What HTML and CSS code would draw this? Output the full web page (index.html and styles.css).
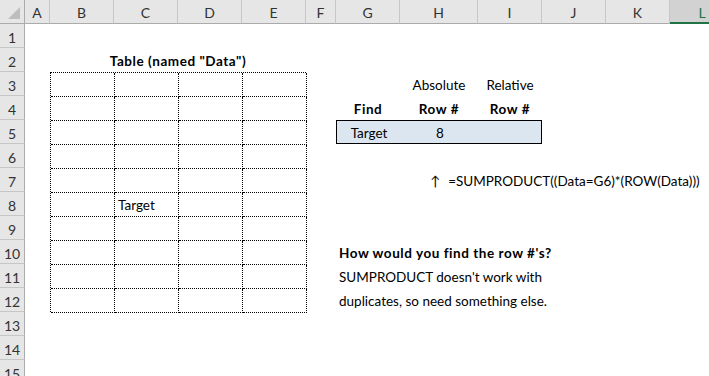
FILE: index.html
```html
<!DOCTYPE html>
<html lang="en">
<head>
    <meta charset="UTF-8">
    <meta name="viewport" content="width=device-width, initial-scale=1.0">
    <title>Find row numbers</title>
    <link rel="stylesheet" href="styles.css">
</head>
<body>
    <div class="sheet">
        <!-- column headers -->
        <div class="corner"><span class="triangulo"></span></div>
        <div class="colhead">A</div>
        <div class="colhead">B</div>
        <div class="colhead">C</div>
        <div class="colhead">D</div>
        <div class="colhead">E</div>
        <div class="colhead">F</div>
        <div class="colhead">G</div>
        <div class="colhead">H</div>
        <div class="colhead">I</div>
        <div class="colhead">J</div>
        <div class="colhead">K</div>
        <div class="colhead ativa">L</div>

        <!-- row headers -->
        <div class="rowhead">1</div>
        <div class="rowhead">2</div>
        <div class="rowhead">3</div>
        <div class="rowhead">4</div>
        <div class="rowhead">5</div>
        <div class="rowhead">6</div>
        <div class="rowhead">7</div>
        <div class="rowhead">8</div>
        <div class="rowhead">9</div>
        <div class="rowhead">10</div>
        <div class="rowhead">11</div>
        <div class="rowhead">12</div>
        <div class="rowhead">13</div>
        <div class="rowhead">14</div>
        <div class="rowhead">15</div>

        <!-- B2:E12 -->
        <div class="cell titulo negrito">Table (named "Data")</div>
        <div class="dados">
            <div></div><div></div><div></div><div></div>
            <div></div><div></div><div></div><div></div>
            <div></div><div></div><div></div><div></div>
            <div></div><div></div><div></div><div></div>
            <div></div><div></div><div></div><div></div>
            <div></div><div>Target</div><div></div><div></div>
            <div></div><div></div><div></div><div></div>
            <div></div><div></div><div></div><div></div>
            <div></div><div></div><div></div><div></div>
            <div></div><div></div><div></div><div></div>
        </div>

        <!-- G3:I5 -->
        <div class="cell centro h3">Absolute</div>
        <div class="cell centro i3">Relative</div>
        <div class="cell centro negrito g4">Find</div>
        <div class="cell centro negrito h4">Row #</div>
        <div class="cell centro negrito i4">Row #</div>
        <div class="busca">
            <div class="cell centro">Target</div>
            <div class="cell centro">8</div>
            <div class="cell"></div>
        </div>

        <div class="cell formula"><span class="seta">&uarr;</span>=SUMPRODUCT((Data=G6)*(ROW(Data)))</div>

        <div class="cell negrito g10">How would you find the row #'s?</div>
        <div class="cell g11">SUMPRODUCT doesn't work with</div>
        <div class="cell g12">duplicates, so need something else.</div>
    </div>
</body>
</html>
```

FILE: styles.css
```css
:root{
    --cabecalho: #e6e6e6;
    --linha: #c6c6c6;
    --borda: #ababab;
    --verde: #217346;
    --azul: #dce6f1;
}

*{
    margin: 0;
    padding: 0;
    box-sizing: border-box;
}

body{
    width: 709px;
    height: 376px;
    overflow: hidden;
    background-color: white;
    font-family: Lato, "Open Sans", sans-serif;
    font-size: 13.5px;
    color: #000;
}

.sheet{
    display: grid;
    grid-template-columns: 25px 25px 64px 64px 64px 64px 30px 64px 78px 64px 64px 64px 64px;
    grid-template-rows: repeat(16, 24px);
}

/* cabeçalhos */
.corner{
    grid-column: 1;
    grid-row: 1;
    background-color: var(--cabecalho);
    border-right: 1px solid var(--borda);
    border-bottom: 1px solid var(--borda);
    display: flex;
    justify-content: flex-end;
    align-items: flex-end;
    padding: 0 4px 4px 0;
}

.triangulo{
    width: 0;
    height: 0;
    border-left: 12px solid transparent;
    border-bottom: 12px solid #bdbdbd;
}

.colhead{
    grid-row: 1;
    background-color: var(--cabecalho);
    border-right: 1px solid var(--linha);
    border-bottom: 1px solid var(--borda);
    display: flex;
    justify-content: center;
    align-items: center;
    padding-top: 2px;
    font-size: 14px;
    color: #333;
}

.colhead.ativa{
    background-color: #d2d2d2;
    border-bottom: 2px solid var(--verde);
    color: var(--verde);
    border-right: none;
}

.rowhead{
    grid-column: 1;
    background-color: var(--cabecalho);
    border-right: 1px solid var(--borda);
    border-bottom: 1px solid var(--linha);
    display: flex;
    justify-content: center;
    align-items: center;
    padding-top: 3px;
    font-size: 14px;
    color: #333;
}

/* células */
.cell{
    display: flex;
    align-items: flex-end;
    padding: 0 3px 3px;
    white-space: nowrap;
}

.centro{
    justify-content: center;
}

.negrito{
    font-weight: bold;
    letter-spacing: 0.55px;
}

.titulo{
    grid-column: 3 / 7;
    grid-row: 3;
    justify-content: center;
}

.dados{
    grid-column: 3 / 7;
    grid-row: 4 / 14;
    display: grid;
    grid-template-columns: repeat(4, 64px);
    grid-template-rows: repeat(10, 24px);
    border-top: 1px dotted #000;
    border-left: 1px dotted #000;
}

.dados > div{
    border-right: 1px dotted #000;
    border-bottom: 1px dotted #000;
    display: flex;
    align-items: flex-end;
    padding: 0 3px 3px;
}

.h3{ grid-column: 9; grid-row: 4; }
.i3{ grid-column: 10; grid-row: 4; }
.g4{ grid-column: 8; grid-row: 5; }
.h4{ grid-column: 9; grid-row: 5; }
.i4{ grid-column: 10; grid-row: 5; }

.busca{
    grid-column: 8 / 11;
    grid-row: 6;
    display: grid;
    grid-template-columns: 64px 78px 64px;
    background-color: var(--azul);
    border: 1px solid #000;
}

.busca > .cell{
    padding-bottom: 2px;
}

.formula{
    grid-column: 9 / 14;
    grid-row: 8;
    padding-left: 30px;
}

.seta{
    margin-right: 8px;
}

.g10{ grid-column: 8 / 14; grid-row: 11; }
.g11{ grid-column: 8 / 14; grid-row: 12; }
.g12{ grid-column: 8 / 14; grid-row: 13; }
```
